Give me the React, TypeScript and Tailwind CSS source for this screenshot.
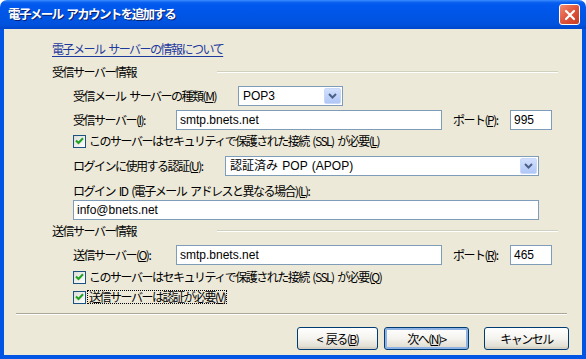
import React from 'react'

const ui = "[font-family:'Noto_Sans_CJK_JP','Liberation_Sans',sans-serif]"
const field = "[font-family:'Liberation_Sans','Noto_Sans_CJK_JP',sans-serif]"

function Acc({ k }: { k: string }) {
  // accelerator key, e.g. (M)
  return (
    <span>
      (<span className="underline">{k}</span>)
    </span>
  )
}

function DropArrow() {
  return (
    <span className="w-[17px] h-[16px] rounded-[2px] border border-[#C8D8FB] bg-linear-to-b from-[#D2E0FD] to-[#AFC6F6] flex items-center justify-center">
      <svg width="9" height="6" viewBox="0 0 9 6">
        <path d="M1 1 L4.5 4.5 L8 1" stroke="#4D6185" strokeWidth="2" fill="none" />
      </svg>
    </span>
  )
}

function Combo({ value, w }: { value: string; w: string }) {
  return (
    <div className={`${w} h-[20px] border border-[#7F9DB9] bg-white flex items-center justify-between pl-[4px] pr-[1px]`}>
      <span className={`tracking-normal [word-spacing:1px] ${field}`}>{value}</span>
      <DropArrow />
    </div>
  )
}

function TextBox({ value, w }: { value: string; w: string }) {
  return (
    <div className={`${w} h-[20px] border border-[#7F9DB9] bg-white flex items-center pl-[3px]`}>
      <span className={`tracking-normal [word-spacing:0px] ${field}`}>{value}</span>
    </div>
  )
}

function Check({ children, focus }: { children: React.ReactNode; focus?: boolean }) {
  return (
    <div className="flex items-center h-[14px] ml-[21px]">
      <span className="w-[13px] h-[13px] border border-[#1C5180] bg-linear-to-br from-[#DCDCD7] to-white flex items-center justify-center">
        <svg width="9" height="8" viewBox="0 0 9 8">
          <path d="M1 3.5 L3.5 6 L8 1.2" stroke="#21A121" strokeWidth="2" fill="none" />
        </svg>
      </span>
      <span className={`ml-[2px] px-[1px] ${focus ? 'outline-1 outline-dotted outline-black' : ''}`}>{children}</span>
    </div>
  )
}

function GroupHead({ title, mt }: { title: string; mt: string }) {
  return (
    <div className={`flex items-center h-[16px] ${mt}`}>
      <span className="w-[165px]">{title}</span>
      <div className="flex-1 h-[2px] border-t border-[#D0D0BF] border-b border-b-white" />
    </div>
  )
}

function XpButton({ children, isDefault }: { children: React.ReactNode; isDefault?: boolean }) {
  return (
    <div
      className={`h-[23px] rounded-[3px] border border-[#003C74] bg-linear-to-b from-white via-[#F4F3EE] to-[#DCD8CC] flex items-center justify-center ${
        isDefault ? 'shadow-[inset_0_0_0_2px_#8DB2E3]' : 'shadow-[inset_0_-2px_0_#D6D0C5]'
      }`}
    >
      {children}
    </div>
  )
}

export default function App() {
  return (
    <div className={`w-[586px] h-[359px] flex flex-col text-[12px] leading-none tracking-[-1.5px] [word-spacing:2.5px] text-black ${ui}`}>
      {/* title bar */}
      <div className="h-[29px] rounded-t-[7px] bg-[linear-gradient(180deg,#3A8CFF_0%,#0A5FEE_9%,#0058EE_18%,#0055E5_55%,#0052DD_85%,#0046CC_100%)] flex items-center justify-between pl-[8px] pr-[6px]">
        <span className="text-white font-bold text-[12.5px] tracking-[-1.6px] [text-shadow:1px_1px_0_#0A1E6E]">
          電子メール アカウントを追加する
        </span>
        <div className="w-[21px] h-[21px] rounded-[3px] border border-white bg-linear-to-br from-[#F08A6E] via-[#E0533C] to-[#C63B22] flex items-center justify-center">
          <svg width="12" height="12" viewBox="0 0 12 12">
            <path d="M2 2 L10 10 M10 2 L2 10" stroke="white" strokeWidth="2.2" strokeLinecap="round" />
          </svg>
        </div>
      </div>

      {/* body */}
      <div className="flex-1 border-x-4 border-b-4 border-[#0055E5] bg-[#ECE9D8] flex flex-col">
        <div className="pl-[48px] pr-[24px] flex flex-col">
          <div className="h-[16px] mt-[12px] flex items-center">
            <span className="text-[#1F3A9E] underline underline-offset-2">電子メール サーバーの情報について</span>
          </div>

          <GroupHead title="受信サーバー情報" mt="mt-[7px]" />

          <div className="flex items-center h-[20px] mt-[6px] ml-[21px]">
            <span className="w-[165px]">
              受信メール サーバーの種類<Acc k="M" />
            </span>
            <Combo value="POP3" w="w-[105px]" />
          </div>

          <div className="flex items-center h-[20px] mt-[4px] ml-[21px]">
            <span className="w-[103px]">
              受信サーバー<Acc k="I" />:
            </span>
            <TextBox value="smtp.bnets.net" w="w-[266px]" />
            <span className="w-[57px] ml-[11px]">
              ポート<Acc k="P" />:
            </span>
            <TextBox value="995" w="w-[42px]" />
          </div>

          <div className="mt-[4px]">
            <Check>
              このサーバーはセキュリティで保護された接続 (SSL) が必要<Acc k="L" />
            </Check>
          </div>

          <div className="flex items-center h-[21px] mt-[7px] ml-[21px]">
            <span className="w-[152px]">
              ログインに使用する認証<Acc k="U" />:
            </span>
            <Combo value="認証済み POP (APOP)" w="w-[314px]" />
          </div>

          <div className="flex items-center h-[14px] mt-[8px] ml-[21px]">
            ログイン ID (電子メール アドレスと異なる場合)<Acc k="L" />:
          </div>

          <div className="mt-[2px] ml-[21px]">
            <TextBox value="info@bnets.net" w="w-[466px]" />
          </div>

          <GroupHead title="送信サーバー情報" mt="mt-[3px]" />

          <div className="flex items-center h-[20px] mt-[6px] ml-[21px]">
            <span className="w-[103px]">
              送信サーバー<Acc k="O" />:
            </span>
            <TextBox value="smtp.bnets.net" w="w-[266px]" />
            <span className="w-[57px] ml-[11px]">
              ポート<Acc k="R" />:
            </span>
            <TextBox value="465" w="w-[42px]" />
          </div>

          <div className="mt-[5px]">
            <Check>
              このサーバーはセキュリティで保護された接続 (SSL) が必要<Acc k="Q" />
            </Check>
          </div>
          <div className="mt-[6px]">
            <Check focus>
              送信サーバーは認証が必要<Acc k="V" />
            </Check>
          </div>
        </div>

        {/* separator */}
        <div className="mt-[9px] ml-[12px] mr-[15px] h-[2px] border-t border-[#ACA899] border-b border-b-white" />

        {/* buttons */}
        <div className="mt-[12px] pr-[13px] flex justify-end">
          <div className="w-[81px]">
            <XpButton>
              &lt; 戻る<Acc k="B" />
            </XpButton>
          </div>
          <div className="w-[85px] ml-[6px]">
            <XpButton isDefault>
              次へ<Acc k="N" /> &gt;
            </XpButton>
          </div>
          <div className="w-[85px] ml-[15px]">
            <XpButton>キャンセル</XpButton>
          </div>
        </div>
      </div>
    </div>
  )
}
